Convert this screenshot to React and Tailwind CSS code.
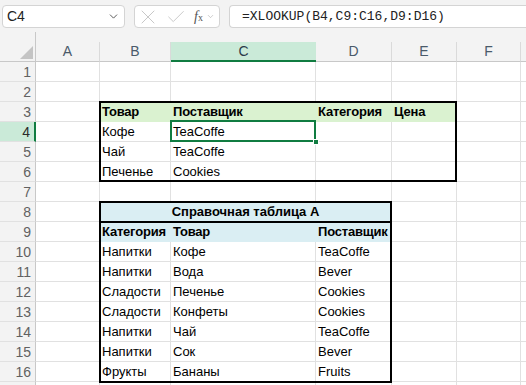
import { ChevronDown, X, Check } from 'lucide-react';

const cols = [
  { key: 'A', w: 64 },
  { key: 'B', w: 71 },
  { key: 'C', w: 145 },
  { key: 'D', w: 76 },
  { key: 'E', w: 65 },
  { key: 'F', w: 64 },
  { key: 'G', w: 40 },
];

const GREEN = 'bg-[#daf2d0]';
const CYAN = 'bg-[#daeef3]';

// row number -> { col: { text, bold, fill } }
const cells = {
  3: {
    B: { text: 'Товар', bold: true, fill: GREEN },
    C: { text: 'Поставщик', bold: true, fill: GREEN },
    D: { text: 'Категория', bold: true, fill: GREEN },
    E: { text: 'Цена', bold: true, fill: GREEN },
  },
  4: { B: { text: 'Кофе' }, C: { text: 'TeaCoffe' } },
  5: { B: { text: 'Чай' }, C: { text: 'TeaCoffe' } },
  6: { B: { text: 'Печенье' }, C: { text: 'Cookies' } },
  9: {
    B: { text: 'Категория', bold: true, fill: CYAN },
    C: { text: 'Товар', bold: true, fill: CYAN },
    D: { text: 'Поставщик', bold: true, fill: CYAN },
  },
  10: { B: { text: 'Напитки' }, C: { text: 'Кофе' }, D: { text: 'TeaCoffe' } },
  11: { B: { text: 'Напитки' }, C: { text: 'Вода' }, D: { text: 'Bever' } },
  12: { B: { text: 'Сладости' }, C: { text: 'Печенье' }, D: { text: 'Cookies' } },
  13: { B: { text: 'Сладости' }, C: { text: 'Конфеты' }, D: { text: 'Cookies' } },
  14: { B: { text: 'Напитки' }, C: { text: 'Чай' }, D: { text: 'TeaCoffe' } },
  15: { B: { text: 'Напитки' }, C: { text: 'Сок' }, D: { text: 'Bever' } },
  16: { B: { text: 'Фрукты' }, C: { text: 'Бананы' }, D: { text: 'Fruits' } },
};

const rows = Array.from({ length: 17 }, (_, i) => i + 1);

function Cell({ w, data }) {
  const fill = data && data.fill;
  return (
    <div
      className={`h-[20px] shrink-0 border-b border-r pl-[2px] leading-[20px] whitespace-nowrap ${
        fill ? `${fill} border-transparent` : 'border-[#e1e1e1]'
      } ${data && data.bold ? 'font-bold tracking-[-0.2px]' : ''}`}
      style={{ width: w }}
    >
      {data ? data.text : ''}
    </div>
  );
}

function MergedTitle() {
  return (
    <div className={`h-[20px] w-[292px] shrink-0 ${CYAN} text-center font-bold leading-[20px] border-b border-r border-transparent`}>
      Справочная таблица A
    </div>
  );
}

function Row({ n }) {
  const selected = n === 4;
  return (
    <div className="flex">
      <div
        className={`h-[20px] w-[36px] shrink-0 border-b pr-[4px] text-right text-[14px] leading-[20px] ${
          selected
            ? 'bg-[#caead8] border-[#e1e1e1] border-r-2 border-r-[#107c41] text-[#2b2b2b]'
            : 'bg-[#f3f3f3] border-[#e1e1e1] border-r border-r-[#c8c8c8] text-[#616161]'
        }`}
      >
        {n < 17 ? n : ''}
      </div>
      {n === 8 ? (
        <>
          <Cell w={64} />
          <MergedTitle />
          {cols.slice(4).map((c) => (
            <Cell key={c.key} w={c.w} />
          ))}
        </>
      ) : (
        cols.map((c) => <Cell key={c.key} w={c.w} data={cells[n] && cells[n][c.key]} />)
      )}
    </div>
  );
}

function FormulaBar() {
  return (
    <div className="flex h-[32px] items-start gap-[9px] bg-[#f3f3f3] pl-[2px] pt-[5px]">
      <div className="flex h-[23px] w-[123px] items-center justify-between rounded-[4px] border border-[#d4d4d4] bg-white pl-[4px] pr-[4px]">
        <span className="text-[14px] text-[#222]">C4</span>
        <ChevronDown size={13} strokeWidth={1.6} className="text-[#444]" />
      </div>
      <div className="flex h-[23px] w-[86px] items-center rounded-[4px] border border-[#d4d4d4] bg-white pl-[1px]">
        <X size={24} strokeWidth={0.9} className="text-[#c2c2c2]" />
        <Check size={22} strokeWidth={0.95} className="ml-[5px] text-[#c2c2c2]" />
        <span className="ml-[7px] font-['Liberation_Serif',serif] text-[14px] italic text-[#555]">
          f<span className="text-[10px] not-italic">x</span>
        </span>
        <ChevronDown size={9} strokeWidth={1.5} className="ml-[3px] text-[#aaa]" />
      </div>
      <div className="flex h-[23px] flex-1 items-center rounded-l-[4px] border border-r-0 border-[#d4d4d4] bg-white pl-[12px]">
        <span className="font-['Liberation_Mono',monospace] text-[13px] text-[#222]">=XLOOKUP(B4,C9:C16,D9:D16)</span>
      </div>
    </div>
  );
}

function ColumnHeader() {
  return (
    <div className="flex">
      <div className="relative h-[30px] w-[36px] shrink-0 border-b border-r border-[#c8c8c8] bg-[#f3f3f3]">
        <div className="absolute left-[20px] top-[14px] h-0 w-0 border-b-[13px] border-l-[13px] border-b-[#c4c4c4] border-l-transparent" />
      </div>
      <div className="flex flex-col">
        <div className="h-[10px] bg-[#f3f3f3]" />
        <div className="flex">
          {cols.map((c) =>
            c.key === 'C' ? (
              <div
                key={c.key}
                className="h-[20px] shrink-0 border-b-2 border-[#107c41] bg-[#caead8] text-center text-[14px] leading-[19px] text-[#2b3b4b]"
                style={{ width: c.w }}
              >
                {c.key}
              </div>
            ) : (
              <div
                key={c.key}
                className="h-[20px] shrink-0 border-b border-r border-[#dadada] border-b-[#c8c8c8] bg-[#f3f3f3] text-center text-[14px] leading-[19px] text-[#4a5a6a]"
                style={{ width: c.w }}
              >
                {c.key === 'G' ? '' : c.key}
              </div>
            )
          )}
        </div>
      </div>
    </div>
  );
}

export default function App() {
  return (
    <div className="h-[385px] w-[526px] overflow-hidden bg-white font-['Liberation_Sans',Arial,sans-serif] text-[13px] text-black">
      <FormulaBar />
      <ColumnHeader />
      <div className="relative">
        {rows.map((n) => (
          <Row key={n} n={n} />
        ))}
        {/* range borders and selection drawn over the grid */}
        <div className="pointer-events-none absolute left-[99px] top-[39px] h-[81px] w-[358px] border-2 border-black" />
        <div className="pointer-events-none absolute left-[99px] top-[139px] h-[182px] w-[293px] border-2 border-black" />
        <div className="pointer-events-none absolute left-[99px] top-[159px] h-[2px] w-[293px] bg-black" />
        <div className="pointer-events-none absolute left-[170px] top-[58px] h-[22px] w-[146px] border-2 border-[#107c41]" />
        <div className="pointer-events-none absolute left-[313px] top-[77px] h-[6px] w-[6px] border border-white bg-[#107c41]" />
      </div>
    </div>
  );
}
